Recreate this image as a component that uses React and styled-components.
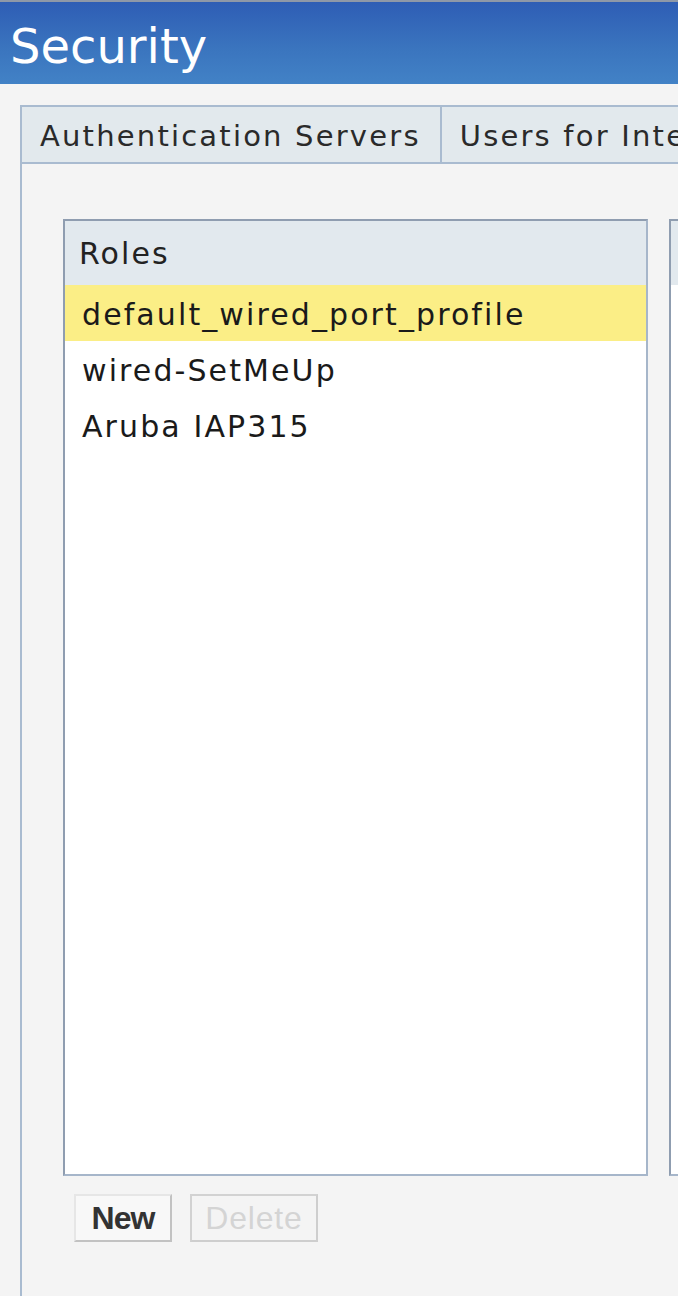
import styled, { createGlobalStyle } from "styled-components";

const GlobalStyle = createGlobalStyle`
  html, body {
    margin: 0;
    padding: 0;
    background: #f4f4f4;
    font-family: "DejaVu Sans", Verdana, sans-serif;
    overflow: hidden;
  }
`;

const Page = styled.div`
  width: 678px;
  height: 1296px;
  overflow: hidden;
  background: #f4f4f4;
`;

const Header = styled.div`
  height: 84px;
  border-top: 2px solid #8e98a8;
  background: linear-gradient(to bottom, #2e5db5 0%, #3a74be 55%, #4282c6 100%);
  display: flex;
  align-items: center;
  padding-left: 10px;
  box-sizing: border-box;
`;

const Title = styled.h1`
  margin: 0;
  color: #fff;
  font-family: "DejaVu Sans", Verdana, sans-serif;
  font-weight: normal;
  font-size: 48px;
  padding-top: 6px;
`;

const Body = styled.div`
  padding: 21px 0 0 20px;
`;

const TabPanel = styled.div`
  border-left: 2px solid #a9bbd0;
  height: 1200px;
`;

const TabBar = styled.div`
  display: flex;
  height: 55px;
  border-top: 2px solid #a9bbd0;
  border-bottom: 2px solid #a9bbd0;
  background: #e2e9ed;
  overflow: hidden;
`;

const Tab = styled.div`
  display: flex;
  align-items: center;
  padding: 2px 19px 0 18px;
  font-size: 29px;
  letter-spacing: 2.2px;
  color: #2a2a2a;
  white-space: nowrap;
  border-right: 2px solid #a9bbd0;
`;

const Content = styled.div`
  padding: 55px 0 0 41px;
`;

const Columns = styled.div`
  display: flex;
  gap: 21px;
`;

const Column = styled.div`
  display: flex;
  flex-direction: column;
`;

const ListBox = styled.div`
  width: ${(p) => p.$width}px;
  height: 953px;
  background: #fff;
  border: 2px solid #a6b6ca;
  border-top-color: #8f9db0;
  border-left-color: #8f9db0;
  flex-shrink: 0;
`;

const ListHeader = styled.div`
  height: 64px;
  background: #e2e9ee;
  display: flex;
  align-items: center;
  padding-left: 14px;
  font-size: 30px;
  letter-spacing: 2.1px;
  color: #222;
`;

const Row = styled.div`
  height: 56px;
  display: flex;
  align-items: center;
  padding: 2px 0 0 17px;
  box-sizing: border-box;
  font-size: 30px;
  letter-spacing: 2.1px;
  color: #1a1a1a;
  white-space: nowrap;
  background: ${(p) => (p.$selected ? "#fbee86" : "#fff")};
`;

const ButtonRow = styled.div`
  display: flex;
  gap: 18px;
  padding: 18px 0 0 11px;
`;

const Button = styled.button`
  width: ${(p) => p.$width}px;
  height: 48px;
  padding: 0;
  background: ${(p) => (p.disabled ? "#f4f4f4" : "#f8f8f8")};
  border: 2px solid ${(p) => (p.disabled ? "#d2d2d2" : "#e6e6e6")};
  border-right-color: ${(p) => (p.disabled ? "#cecece" : "#c2c2c2")};
  border-bottom-color: ${(p) => (p.disabled ? "#cecece" : "#c2c2c2")};
  font-family: "Liberation Sans", Arial, sans-serif;
  font-size: 32px;
  font-weight: ${(p) => (p.disabled ? "normal" : "bold")};
  color: ${(p) => (p.disabled ? "#d4d4d4" : "#333")};
  letter-spacing: ${(p) => (p.disabled ? "0.8px" : "-1px")};
  cursor: default;
`;

const roles = ["default_wired_port_profile", "wired-SetMeUp", "Aruba IAP315"];

export default function App() {
  return (
    <Page>
      <GlobalStyle />
      <Header>
        <Title>Security</Title>
      </Header>
      <Body>
        <TabPanel>
          <TabBar>
            <Tab>Authentication Servers</Tab>
            <Tab>Users for Internal Server</Tab>
          </TabBar>
          <Content>
            <Columns>
              <Column>
                <ListBox $width={581}>
                  <ListHeader>Roles</ListHeader>
                  {roles.map((r, i) => (
                    <Row key={r} $selected={i === 0}>
                      {r}
                    </Row>
                  ))}
                </ListBox>
                <ButtonRow>
                  <Button $width={98}>New</Button>
                  <Button $width={128} disabled>
                    Delete
                  </Button>
                </ButtonRow>
              </Column>
              <Column>
                <ListBox $width={300}>
                  <ListHeader />
                </ListBox>
              </Column>
            </Columns>
          </Content>
        </TabPanel>
      </Body>
    </Page>
  );
}
